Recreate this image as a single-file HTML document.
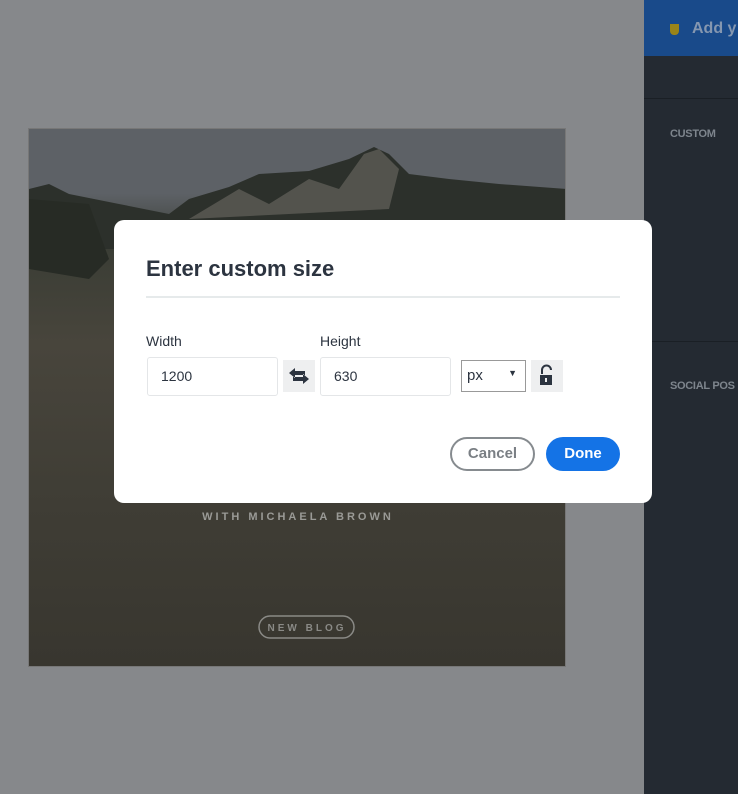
<!DOCTYPE html>
<html><head><style>
*{margin:0;padding:0;box-sizing:border-box}
body{width:738px;height:794px;overflow:hidden;background:#86888b;font-family:"Liberation Sans",sans-serif;position:relative}
.abs{position:absolute}
#img{left:28px;top:128px;width:538px;height:539px;overflow:hidden;background:linear-gradient(180deg,#5d6166 0%,#5d6166 12%,#3a3d35 22%,#48453c 40%,#3f3d35 70%,#38362f 100%);border:1px solid #777}
#side{left:644px;top:0;width:94px;height:794px;background:#242a32}
#dlg{left:114px;top:220px;width:538px;height:283px;background:#fff;border-radius:10px}
.inp{background:#fff;border:1px solid #e4e6e8;border-radius:3px;font-size:14px;color:#2c3440;padding-left:13px;line-height:37px;height:39px}
.ib{background:#eeeff0;width:32px;height:32px}
</style></head><body>
<div id="img" class="abs">
<svg width="538" height="539" style="position:absolute;left:0;top:0">
<polygon points="0,60 20,55 40,65 90,75 140,85 160,70 200,58 230,45 280,42 320,30 345,18 360,25 380,45 420,50 470,55 538,60 538,120 0,120" fill="#2c302b"/>
<polygon points="160,90 210,60 240,75 280,50 310,60 335,25 350,20 370,40 360,80" fill="#5e5c56" opacity=".8"/>
<polygon points="0,70 60,75 80,130 60,150 0,140" fill="#272b25"/>
<text x="269" y="391" fill="#9a9a96" font-size="11" font-weight="bold" letter-spacing="3" text-anchor="middle" font-family="Liberation Sans">WITH MICHAELA BROWN</text>
<rect x="230" y="487" width="95" height="22" rx="11" fill="none" stroke="#8a8a86" stroke-width="1.5"/>
<text x="278" y="502" fill="#8a8a86" font-size="10" font-weight="bold" letter-spacing="3" text-anchor="middle" font-family="Liberation Sans">NEW BLOG</text>
</svg></div>
<div id="side" class="abs">
<div class="abs" style="left:0;top:0;width:94px;height:56px;background:#194a8a"></div>
<div class="abs" style="left:26px;top:24px;width:9px;height:11px;background:#9a8418;border-radius:0 0 4px 4px"></div>
<div class="abs" style="left:48px;top:20px;color:#8597b0;font-weight:bold;font-size:16px;white-space:nowrap">Add y</div>
<div class="abs" style="left:0;top:98px;width:94px;height:1px;background:#1a1f25"></div>
<div class="abs" style="left:26px;top:128px;color:#7e858d;font-weight:bold;font-size:11px;letter-spacing:-.3px">CUSTOM</div>
<div class="abs" style="left:0;top:341px;width:94px;height:1px;background:#1a1f25"></div>
<div class="abs" style="left:26px;top:380px;color:#7e858d;font-weight:bold;font-size:11px;letter-spacing:-.3px;white-space:nowrap">SOCIAL POS</div>
</div>
<div id="dlg" class="abs">
<div class="abs" style="left:32px;top:36px;font-size:22px;font-weight:bold;color:#2c3440">Enter custom size</div>
<div class="abs" style="left:32px;top:76px;width:474px;height:2px;background:#e6eaeb"></div>
<div class="abs" style="left:32px;top:113px;font-size:14px;color:#2c3440">Width</div>
<div class="abs" style="left:206px;top:113px;font-size:14px;color:#2c3440">Height</div>
<div class="abs inp" style="left:33px;top:137px;width:131px">1200</div>
<div class="abs ib" style="left:169px;top:140px"><svg width="32" height="32"><path d="M6 13 L12 8 L12 11 L22 11 L22 15 L12 15 L12 18 Z M26 19 L20 14 L20 17 L10 17 L10 21 L20 21 L20 24 Z" fill="#2c3440"/></svg></div>
<div class="abs inp" style="left:206px;top:137px;width:131px">630</div>
<div class="abs" style="left:347px;top:140px;width:65px;height:32px;border:1px solid #999;font-size:15px;color:#2c3440;padding:6px 0 0 5px">px<span style="position:absolute;right:8px;top:7px;font-size:9px">▼</span></div>
<div class="abs ib" style="left:417px;top:140px"><svg width="32" height="32"><path d="M11 14 V10 a4.5 4.5 0 0 1 9 0" fill="none" stroke="#2c3440" stroke-width="2"/><rect x="9" y="15" width="12" height="10" fill="#2c3440"/><rect x="14" y="18" width="2" height="4" fill="#eee"/></svg></div>
<div class="abs" style="left:336px;top:217px;width:85px;height:34px;border:2px solid #868b8f;border-radius:17px;font-size:15px;font-weight:bold;color:#7a7f84;text-align:center;line-height:30px">Cancel</div>
<div class="abs" style="left:432px;top:217px;width:74px;height:34px;background:#1473e6;border-radius:17px;font-size:15px;font-weight:bold;color:#fff;text-align:center;line-height:34px">Done</div>
</div>
</body></html>
